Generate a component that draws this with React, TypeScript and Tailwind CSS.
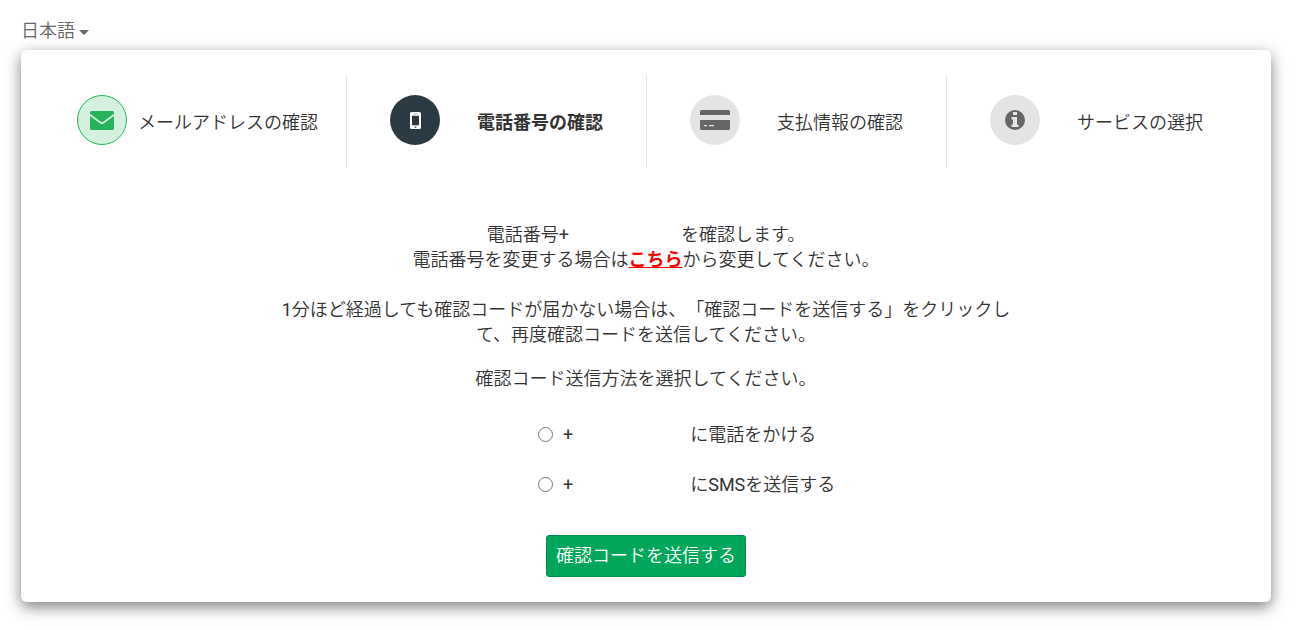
import React, { useState } from 'react'

interface StepProps {
  label: string;
  icon: React.ReactNode;
  circle: string;
  className?: string;
  active?: boolean;
}

const EnvelopeIcon = () => (
  <svg width="24" height="19" viewBox="0 0 24 19" fill="currentColor" aria-hidden="true">
    <path d="M1.5 0h21A1.5 1.5 0 0 1 24 1.5v1.2l-10.800 8q-1.200.8-2.400 0L0 2.700V1.500A1.500 1.500 0 0 1 1.500 0z" />
    <path d="M0 4.900l10.600 7.900q1.400.9 2.800 0L24 4.900v12.600a1.500 1.500 0 0 1-1.500 1.500h-21A1.500 1.500 0 0 1 0 17.500z" />
  </svg>
)

const PhoneIcon = () => (
  <svg width="11" height="17" viewBox="0 0 11 17" fill="currentColor" aria-hidden="true">
    <path fillRule="evenodd" d="M1.500 0h8A1.500 1.500 0 0 1 11 1.500v14a1.500 1.500 0 0 1-1.500 1.500h-8A1.500 1.500 0 0 1 0 15.500v-14A1.500 1.500 0 0 1 1.500 0zM2 3.700v9.600h7V3.700zM4.200 1.700v.5h2.600v-.5zM4.700 14.600v1.100h1.600v-1.100z" />
  </svg>
)

const CardIcon = () => (
  <svg width="30" height="20" viewBox="0 0 30 20" fill="currentColor" aria-hidden="true">
    <path d="M1.500 0h27A1.500 1.500 0 0 1 30 1.500V5H0V1.500A1.500 1.500 0 0 1 1.500 0z" />
    <path fillRule="evenodd" d="M0 10h30v8.500a1.500 1.500 0 0 1-1.500 1.500h-27A1.500 1.500 0 0 1 0 18.500zM4 15v1.300h3v-1.300zM9 15v1.300h5v-1.300z" />
  </svg>
)

const InfoIcon = () => (
  <svg width="20" height="20" viewBox="0 0 20 20" fill="currentColor" aria-hidden="true">
    <path fillRule="evenodd" d="M10 0a10 10 0 1 0 0 20a10 10 0 0 0 0-20zM8 2h4v3H8zM6.500 7H12v7.500h1.500V17h-7v-2.500H8v-5H6.500z" />
  </svg>
)

const Step = ({ label, icon, circle, className = "px-[43px]", active }: StepProps) => (
  <li
    className={`flex items-center justify-between border-l border-[#e4e4e4] pt-5 pb-[23px] first:border-l-0 ${className}`}
    aria-current={active ? "step" : undefined}
  >
    <span className={`flex size-[50px] shrink-0 items-center justify-center rounded-full ${circle}`}>{icon}</span>
    <span className={`whitespace-nowrap pt-1 ${active ? "font-bold" : ""}`}>{label}</span>
  </li>
)

const App = () => {
  const [method, setMethod] = useState("")

  return (
    <div className="bg-white pt-[18px] pr-8 pb-7 pl-[21px] font-['Roboto','Noto_Sans_CJK_JP',sans-serif] text-[18px] leading-[25px] font-[350] text-[#333] [text-spacing-trim:space-all]">
      <div className="flex h-8 items-start gap-1 text-[#666]">
        <select aria-label="言語" className="appearance-none bg-transparent field-sizing-content">
          <option>日本語</option>
        </select>
        <svg width="10" height="5" viewBox="0 0 10 5" fill="currentColor" className="mt-3" aria-hidden="true">
          <path d="M0 0h10L5 5z" />
        </svg>
      </div>

      <main className="rounded-md bg-white p-[25px] shadow-[0_5px_15px_rgba(0,0,0,0.5)]">
        <ol className="grid grid-cols-4">
          <Step label="メールアドレスの確認" icon={<EnvelopeIcon />} circle="border border-[#27b35b] bg-[#d4f0de] text-[#27b35b]" className="pl-[31px] pr-7" />
          <Step label="電話番号の確認" icon={<PhoneIcon />} circle="bg-[#2b3a42] text-white" active />
          <Step label="支払情報の確認" icon={<CardIcon />} circle="bg-[#e4e4e4] text-[#666]" />
          <Step label="サービスの選択" icon={<InfoIcon />} circle="bg-[#e4e4e4] text-[#666]" />
        </ol>

        <form className="mx-auto mt-[54px] max-w-[738px] text-center" onSubmit={(e) => e.preventDefault()}>
          <p>
            電話番号<span className="font-normal">+</span><span className="inline-block w-28" />を確認します。<br />
            電話番号を変更する場合は<a href="#" className="font-bold text-[#f00] underline">こちら</a>から変更してください。
          </p>
          <p className="mt-[25px]">
            <span className="font-normal">1</span>分ほど経過しても確認コードが届かない場合は、「確認コードを送信する」をクリックして、再度確認コードを送信してください。
          </p>
          <p className="mt-[19px]">確認コード送信方法を選択してください。</p>

          <div className="mt-[31px] flex flex-col items-start gap-[25px] pl-[261px]">
            <label className="flex items-center">
              <input type="radio" name="method" className="mr-2.5 size-[15px]" checked={method === "call"} onChange={() => setMethod("call")} />
              <span className="font-normal">+</span><span className="w-[117px]" />に電話をかける
            </label>
            <label className="flex items-center">
              <input type="radio" name="method" className="mr-2.5 size-[15px]" checked={method === "sms"} onChange={() => setMethod("sms")} />
              <span className="font-normal">+</span><span className="w-[117px]" />に<span className="font-normal">SMS</span>を送信する
            </label>
          </div>

          <button type="submit" className="mt-[38px] rounded-[3px] border border-[#008d4c] bg-[#00a65a] px-[9px] py-[7px] leading-[26px] text-white">
            確認コードを送信する
          </button>
        </form>
      </main>
    </div>
  )
}

export default App
